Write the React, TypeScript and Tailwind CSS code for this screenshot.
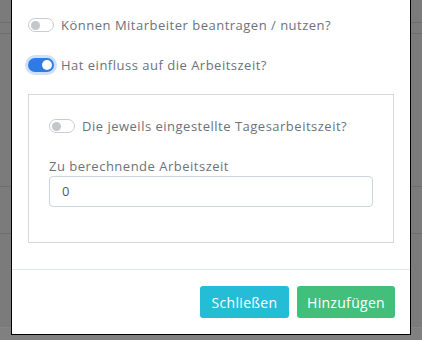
import React from "react";

const font = { fontFamily: '"Open Sans", "Noto Sans", sans-serif' };

type SwitchProps = { checked?: boolean };

function Switch({ checked = false }: SwitchProps) {
  if (checked) {
    return (
      <span className="relative flex h-[14px] w-[26px] shrink-0 items-center rounded-full bg-[#2e7be4] ring-[3px] ring-[#cfe0fb]">
        <span className="absolute right-[2px] h-[10px] w-[10px] rounded-full bg-white" />
      </span>
    );
  }
  return (
    <span className="relative flex h-[14px] w-[26px] shrink-0 items-center rounded-full border border-[#c9ccd1] bg-white">
      <span className="absolute left-[2px] h-[9px] w-[9px] rounded-full bg-[#c4c6c9]" />
    </span>
  );
}

function ToggleRow({ label, checked }: { label: string; checked?: boolean }) {
  return (
    <div className="flex h-5 items-center gap-[7px]">
      <Switch checked={checked} />
      <span className="text-[13px] leading-5 tracking-[0.5px] text-[#6c727c]">{label}</span>
    </div>
  );
}

export default function App() {
  return (
    <div className="relative h-[340px] w-[422px] overflow-hidden bg-[#7b7b7b]" style={font}>
      {/* page behind the backdrop */}
      <div className="flex flex-col">
        <div className="h-[22px]" />
        <div className="h-[11px] border-t border-[#6e6e6e]" />
        <div className="h-[153px] border-t border-[#6e6e6e]" />
        <div className="h-[47px] border-t border-[#6e6e6e]" />
        <div className="h-[94px] border-t border-[#6e6e6e]" />
        <div className="h-[13px] border-t border-[#858585] bg-[#808080]" />
      </div>

      <div className="absolute left-[11px] top-0 flex w-[400px] flex-col border-x border-b border-black bg-white">
        <div className="px-4 pt-[15px]">
          <ToggleRow label="Können Mitarbeiter beantragen / nutzen?" />
          <div className="mt-5">
            <ToggleRow label="Hat einfluss auf die Arbeitszeit?" checked />
          </div>

          <div className="mt-[19px] border border-[#d5d9df] px-5 pb-[35px] pt-[21px]">
            <ToggleRow label="Die jeweils eingestellte Tagesarbeitszeit?" />
            <div className="mt-5 text-[13px] leading-5 tracking-[0.5px] text-[#6c727c]">
              Zu berechnende Arbeitszeit
            </div>
            <div className="flex h-[31px] w-[324px] items-center rounded-[4px] border border-[#ced4da] px-3 text-[13px] text-[#55595f]">
              0
            </div>
          </div>
        </div>

        <div className="mt-[26px] flex justify-end gap-2 border-t border-[#e3e8ef] px-[15px] pb-4 pt-4">
          <button className="h-8 w-[89px] rounded-[3px] bg-[#25bcd5] text-[14px] font-medium tracking-[0.3px] text-white">
            Schließen
          </button>
          <button className="h-8 w-[98px] rounded-[3px] bg-[#42bf7a] text-[14px] font-medium tracking-[0.3px] text-white">
            Hinzufügen
          </button>
        </div>
      </div>
    </div>
  );
}
